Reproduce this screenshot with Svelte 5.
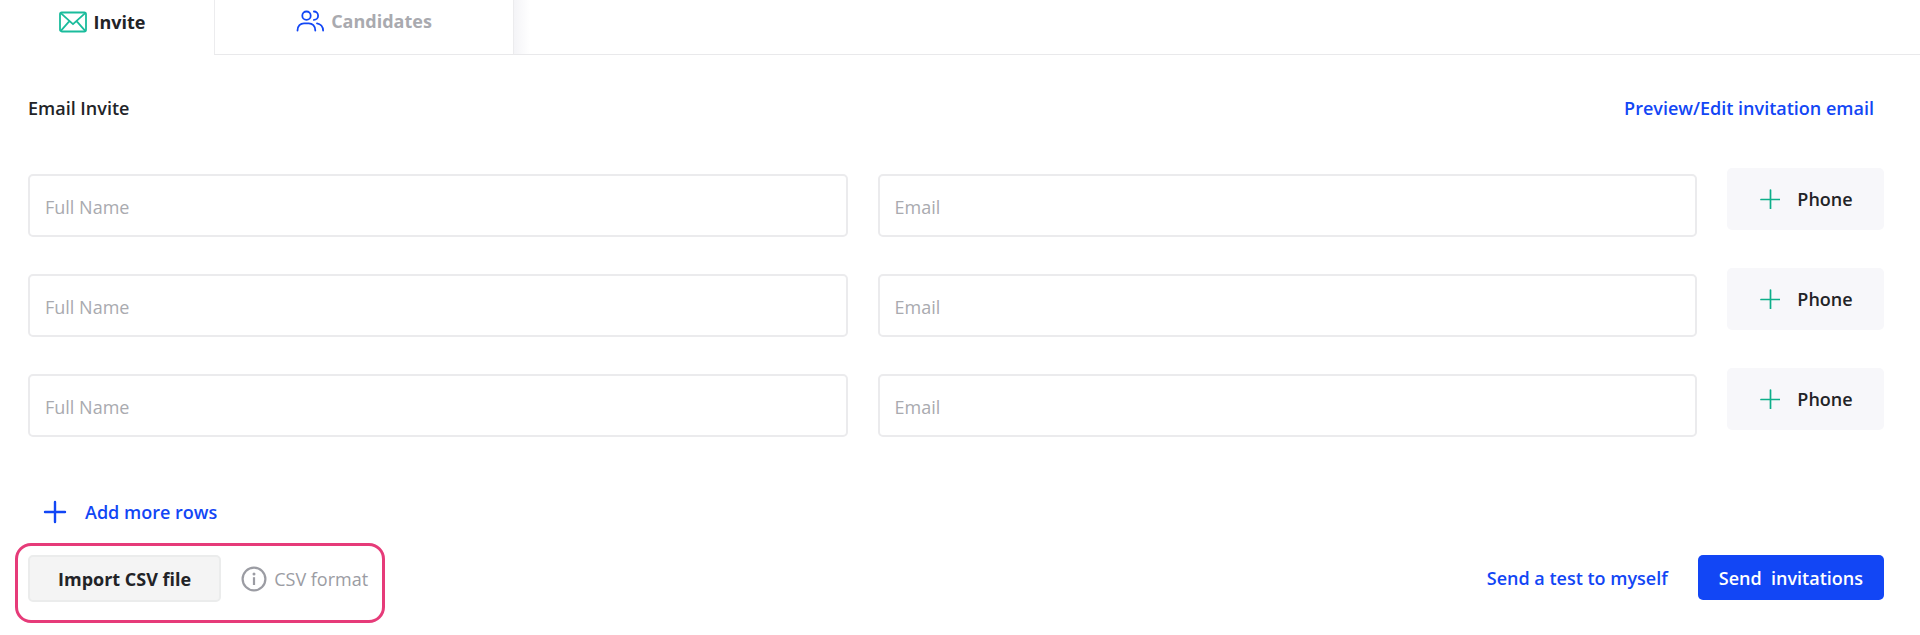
<script>
  let rows = $state([
    { name: '', email: '' },
    { name: '', email: '' },
    { name: '', email: '' }
  ]);

  function addRow() {
    rows.push({ name: '', email: '' });
  }
</script>

<div class="page">
  <nav class="tabs">
    <button class="tab active" type="button">
      <svg width="28" height="22" viewBox="0 0 28 22" fill="none" stroke="#1abc9c" stroke-width="1.8" stroke-linejoin="round" aria-hidden="true">
        <rect x="1" y="1.5" width="26" height="19" rx="1.8" />
        <path d="M1.8 2.2 14 13.2 26.2 2.2M1.8 19.8 10.4 10.2M26.2 19.8 17.6 10.2" />
      </svg>
      <span>Invite</span>
    </button>
    <button class="tab other" type="button">
      <svg width="28" height="22" viewBox="0 0 28 22" fill="none" stroke="#1246f5" stroke-width="1.8" stroke-linecap="round" aria-hidden="true">
        <circle cx="10.5" cy="5.7" r="4.2" />
        <path d="M1.5 20.6c0-4.6 3-7.3 6.500-7.300h4.800c3.500 0 6.500 2.700 6.500 7.300" />
        <path d="M17.900 1.500a4.200 4.200 0 0 1 0 8.400M21 13.300c3.400.5 6.100 3.400 6.100 7.300" />
      </svg>
      <span>Candidates</span>
    </button>
    <div class="rest"></div>
  </nav>

  <main>
    <header>
      <h1>Email Invite</h1>
      <a href="#preview">Preview/Edit invitation email</a>
    </header>

    <div class="rows">
      {#each rows as row}
        <div class="row">
          <input type="text" placeholder="Full Name" aria-label="Full Name" bind:value={row.name} />
          <input type="email" placeholder="Email" aria-label="Email" bind:value={row.email} />
          <button class="phone" type="button">
            <svg width="20" height="20" viewBox="0 0 20 20" fill="none" stroke="#0cae89" stroke-width="1.7" stroke-linecap="round" aria-hidden="true">
              <path d="M10.500 1v18.500M1 10.500h18.500" />
            </svg>
            <span>Phone</span>
          </button>
        </div>
      {/each}
    </div>

    <button class="add" type="button" onclick={addRow}>
      <svg width="24" height="24" viewBox="0 0 24 24" fill="none" stroke="#1246f5" stroke-width="2.4" stroke-linecap="round" aria-hidden="true">
        <path d="M12 2v20M2 12h20" />
      </svg>
      <span>Add more rows</span>
    </button>
  </main>

  <footer>
    <div class="csv">
      <button class="import" type="button">Import CSV file</button>
      <a class="format" href="#csv-format">
        <svg width="26" height="26" viewBox="0 0 26 26" fill="none" stroke="#9b9ca3" stroke-width="2.200" aria-hidden="true">
          <circle cx="13" cy="13" r="11.400" />
          <path d="M13 11.200v7.800" />
          <circle cx="13" cy="8" r="1.500" fill="#9b9ca3" stroke="none" />
        </svg>
        <span>CSV format</span>
      </a>
    </div>
    <div class="actions">
      <a href="#send-test">Send a test to myself</a>
      <button class="send" type="button">Send&nbsp; invitations</button>
    </div>
  </footer>
</div>

<style>
  :global(body) {
    background: #fff;
  }

  .page {
    font-family: "Open Sans", sans-serif;
    font-size: 18px;
    line-height: 24px;
    font-weight: 600;
    color: #222327;
    overflow: hidden;
  }

  .page * {
    box-sizing: border-box;
  }

  button {
    font: inherit;
    color: inherit;
    border: 0;
    background: none;
    padding: 0;
    margin: 0;
    cursor: pointer;
    white-space: nowrap;
  }

  a {
    color: #1246f5;
    text-decoration: none;
    white-space: nowrap;
  }

  svg {
    flex: none;
  }

  .tabs {
    display: flex;
    height: 55px;
  }

  .tab {
    display: flex;
    justify-content: center;
    align-items: center;
    gap: 7px;
    font-weight: 700;
    padding-bottom: 12px;
  }

  .active {
    width: 214px;
    padding-right: 10px;
    padding-bottom: 11px;
  }

  .other {
    width: 300px;
    color: #a9aaaf;
    border-left: 1px solid #ececee;
    border-right: 1px solid #ececee;
    border-bottom: 1px solid #e9e9eb;
  }

  .rest {
    flex: 1;
    border-bottom: 1px solid #e9e9eb;
    background: linear-gradient(to right, #f4f4f7, #fff 16px);
  }

  main {
    padding: 41px 36px 0 28px;
  }

  header {
    display: flex;
    justify-content: space-between;
    padding-right: 10px;
  }

  h1 {
    font: inherit;
    margin: 0;
  }

  .rows {
    display: grid;
    gap: 31px;
    margin-top: 48px;
  }

  .row {
    display: grid;
    grid-template-columns: 1fr 1fr 157px;
    column-gap: 30px;
    align-items: start;
  }

  input {
    width: 100%;
    height: 63px;
    margin: 6px 0 0;
    padding: 3px 15px 0;
    border: 2px solid #ebebed;
    border-radius: 5px;
    font: inherit;
    font-weight: 500;
    color: #222327;
    background: #fff;
  }

  input::placeholder {
    color: #a9aaaf;
    opacity: 1;
  }

  .phone {
    display: flex;
    align-items: center;
    justify-content: center;
    gap: 17px;
    height: 62px;
    padding-left: 2px;
    background: #f7f7fa;
    border-radius: 5px;
  }

  .add {
    display: flex;
    align-items: center;
    gap: 18px;
    margin: 63px 0 0 15px;
    color: #1246f5;
  }

  footer {
    display: flex;
    justify-content: space-between;
    align-items: flex-start;
    padding: 19px 36px 0 15px;
  }

  .csv {
    display: flex;
    align-items: center;
    gap: 20px;
    border: 3px solid #e63b79;
    border-radius: 16px;
    padding: 9px 14px 18px 10px;
  }

  .import {
    height: 47px;
    padding: 0 28px;
    background: #f4f4f4;
    border: 2px solid #ebecec;
    border-radius: 5px;
    font-weight: 700;
  }

  .format {
    display: flex;
    align-items: center;
    gap: 7px;
    color: #9b9ca3;
    font-weight: 500;
  }

  .actions {
    display: flex;
    align-items: center;
    gap: 30px;
    margin-top: 12px;
  }

  .send {
    height: 45px;
    padding: 0 21px;
    border-radius: 5px;
    background: #1246f5;
    color: #fff;
  }
</style>
